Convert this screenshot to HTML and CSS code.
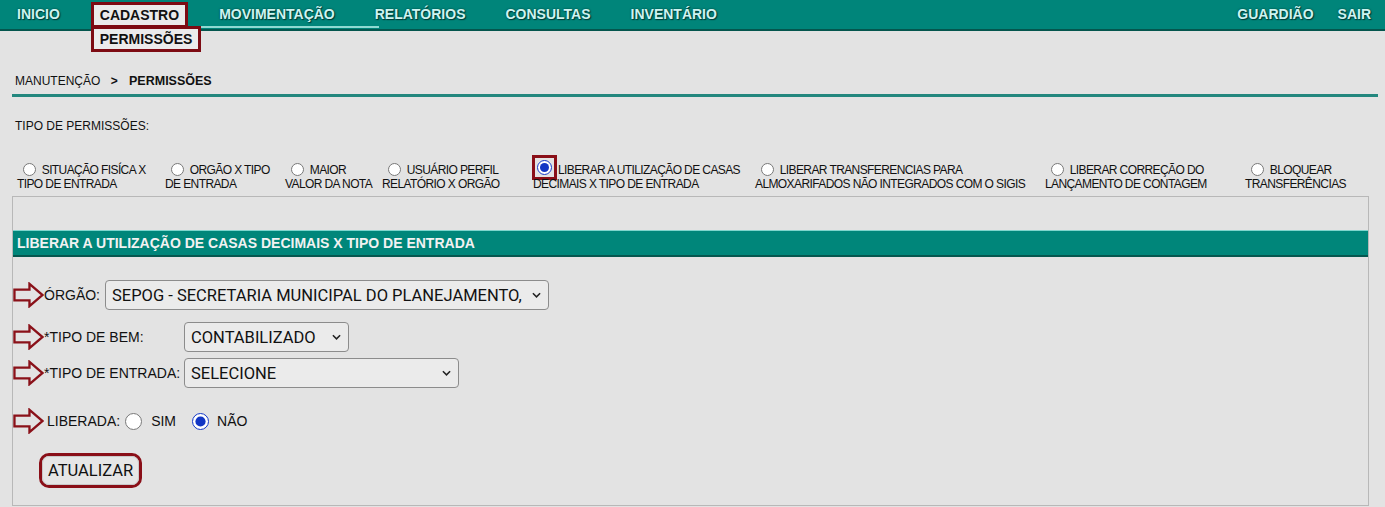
FILE: index.html
```html
<!DOCTYPE html>
<html lang="pt-BR">
<head>
  <meta charset="UTF-8">
  <meta name="viewport" content="width=device-width, initial-scale=1.0">
  <title>Permissões</title>
  <link rel="stylesheet" href="styles.css">
</head>
<body>
  <nav class="topbar">
    <ul class="menu">
      <li><a href="#">INICIO</a></li>
      <li class="menu-open">
        <a href="#">CADASTRO</a>
        <ul class="submenu">
          <li><a href="#">PERMISSÕES</a></li>
        </ul>
      </li>
      <li class="menu-hover"><a href="#">MOVIMENTAÇÃO</a></li>
      <li><a href="#">RELATÓRIOS</a></li>
      <li><a href="#">CONSULTAS</a></li>
      <li><a href="#">INVENTÁRIO</a></li>
    </ul>
    <ul class="menu menu-right">
      <li><a href="#">GUARDIÃO</a></li>
      <li><a href="#">SAIR</a></li>
    </ul>
  </nav>

  <main class="page">
    <div class="crumb">MANUTENÇÃO <span class="sep">&gt;</span> <b>PERMISSÕES</b></div>

    <p class="section-label">TIPO DE PERMISSÕES:</p>

    <div class="options">
      <label class="opt"><input type="radio" name="tipo"> SITUAÇÃO FISÍCA X<br>TIPO DE ENTRADA</label>
      <label class="opt"><input type="radio" name="tipo"> ORGÃO X TIPO<br>DE ENTRADA</label>
      <label class="opt"><input type="radio" name="tipo"> MAIOR<br>VALOR DA NOTA</label>
      <label class="opt"><input type="radio" name="tipo"> USUÁRIO PERFIL<br>RELATÓRIO X ORGÃO</label>
      <label class="opt opt-picked"><input type="radio" name="tipo" checked>LIBERAR A UTILIZAÇÃO DE CASAS<br>DECIMAIS X TIPO DE ENTRADA</label>
      <label class="opt"><input type="radio" name="tipo"> LIBERAR TRANSFERENCIAS PARA<br>ALMOXARIFADOS NÃO INTEGRADOS COM O SIGIS</label>
      <label class="opt"><input type="radio" name="tipo"> LIBERAR CORREÇÃO DO<br>LANÇAMENTO DE CONTAGEM</label>
      <label class="opt"><input type="radio" name="tipo"> BLOQUEAR<br>TRANSFERÊNCIAS</label>
    </div>

    <section class="panel">
      <h2 class="panel-title">LIBERAR A UTILIZAÇÃO DE CASAS DECIMAIS X TIPO DE ENTRADA</h2>

      <form class="form">
        <div class="row row-orgao">
          <svg class="arrow" viewBox="0 0 32 26"><polygon points="1.5,7.5 17,7.5 17,1.5 30.5,13 17,24.5 17,18.5 1.5,18.5"/></svg>
          <label>ÓRGÃO:</label>
          <span class="select select-orgao">
            <select><option>SEPOG - SECRETARIA MUNICIPAL DO PLANEJAMENTO,</option></select>
            <svg class="chev" viewBox="0 0 10 6"><polyline points="1,1 5,5 9,1"/></svg>
          </span>
        </div>

        <div class="row row-bem">
          <svg class="arrow" viewBox="0 0 32 26"><polygon points="1.5,7.5 17,7.5 17,1.5 30.5,13 17,24.5 17,18.5 1.5,18.5"/></svg>
          <label class="label-fixed">*TIPO DE BEM:</label>
          <span class="select select-bem">
            <select><option>CONTABILIZADO</option></select>
            <svg class="chev" viewBox="0 0 10 6"><polyline points="1,1 5,5 9,1"/></svg>
          </span>
        </div>

        <div class="row row-entrada">
          <svg class="arrow" viewBox="0 0 32 26"><polygon points="1.5,7.5 17,7.5 17,1.5 30.5,13 17,24.5 17,18.5 1.5,18.5"/></svg>
          <label class="label-fixed">*TIPO DE ENTRADA:</label>
          <span class="select select-entrada">
            <select><option>SELECIONE</option></select>
            <svg class="chev" viewBox="0 0 10 6"><polyline points="1,1 5,5 9,1"/></svg>
          </span>
        </div>

        <div class="row row-liberada">
          <svg class="arrow" viewBox="0 0 32 26"><polygon points="1.5,7.5 17,7.5 17,1.5 30.5,13 17,24.5 17,18.5 1.5,18.5"/></svg>
          <span class="label-liberada">LIBERADA:</span>
          <label class="yesno"><input type="radio" name="liberada"> SIM</label>
          <label class="yesno"><input type="radio" name="liberada" checked> NÃO</label>
        </div>

        <div class="actions">
          <span class="btn-ring"><button type="button" class="btn">ATUALIZAR</button></span>
        </div>
      </form>
    </section>
  </main>
</body>
</html>
```

FILE: styles.css
```css
/* page */
body {
  margin: 0;
  background-color: #e3e3e3;
  font-family: "Liberation Sans", Arial, sans-serif;
  color: #111;
}
ul {
  list-style: none;
  margin: 0;
  padding: 0;
}
a {
  text-decoration: none;
}

/* top menu */
.topbar {
  display: flex;
  justify-content: space-between;
  height: 29px;
  padding: 0 14px 0 17px;
  background-color: #00857a;
  border-bottom: 2px solid #04564e;
}
.menu {
  display: flex;
  gap: 40px;
}
.menu-right {
  gap: 24px;
}
.menu > li {
  position: relative;
  display: flex;
  align-items: center;
}
.menu > li > a {
  font-size: 14px;
  font-weight: bold;
  line-height: 27px;
  color: #cdf4f1;
  text-shadow: 0 0 2px #013a35, 1px 1px 1px #013a35;
}
.menu-open > a {
  display: block;
  margin: 0 -9px;
  padding: 0 6px;
  line-height: 20px !important;
  background-color: #ebebeb;
  border: 3px solid #7d0b13;
  color: #111 !important;
  text-shadow: none !important;
}
.menu-hover > a::after {
  content: "";
  position: absolute;
  left: -18px;
  right: -44px;
  bottom: 1px;
  height: 2px;
  background-color: #8fd9d2;
}
.submenu {
  position: absolute;
  top: 26px;
  left: -9px;
  background-color: #ebebeb;
  border: 3px solid #7d0b13;
  padding: 0 6px;
  white-space: nowrap;
  z-index: 2;
}
.submenu a {
  font-size: 14px;
  font-weight: bold;
  line-height: 20px;
  color: #111;
}

/* content */
.page {
  padding: 0 7px 0 12px;
}
.crumb {
  margin-top: 43px;
  padding-left: 3px;
  font-size: 12px;
  line-height: 14px;
  padding-bottom: 6px;
  border-bottom: 3px solid #23877e;
}
.crumb b {
  font-size: 12.5px;
}
.crumb .sep {
  margin: 0 8px 0 7px;
  font-weight: bold;
}
.section-label {
  margin: 22px 0 0 3px;
  font-size: 12px;
  line-height: 14px;
}

/* permission type radios */
.options {
  display: grid;
  grid-template-columns: 148px 120px 97px 151px 222px 290px 200px 1fr;
  height: 28px;
  margin-top: 30px;
  padding-left: 5px;
}
.opt {
  height: 28px;
  font-size: 12px;
  line-height: 14px;
  letter-spacing: -0.6px;
  white-space: nowrap;
}
.opt input {
  width: 13px;
  height: 13px;
  margin: 0 3px 0 6px;
  vertical-align: -2px;
}
.opt-picked input {
  width: 15px;
  height: 15px;
  margin: -3px 6px -3px 4px;
  vertical-align: -1px;
  accent-color: #1236c4;
  outline: 3px solid #8a0f18;
  outline-offset: 2px;
  border-radius: 3px;
}

/* panel */
.panel {
  margin: 5px 9px 0 0;
  height: 275px;
  padding-top: 33px;
  border: 1px solid #b8b8b8;
}
.panel-title {
  margin: 0;
  height: 24px;
  padding-left: 4px;
  font-size: 14px;
  font-weight: bold;
  line-height: 24px;
  color: #f2f2f2;
  background-color: #00867a;
  border-top: 1px solid #7ed5cd;
  border-bottom: 2px solid #05574f;
}
.form {
  padding-top: 23px;
}
.row {
  display: flex;
  align-items: center;
  font-size: 14px;
}
.row-orgao { height: 30px; }
.row-bem { height: 30px; margin-top: 12px; }
.row-entrada { height: 30px; margin-top: 6px; }
.row-liberada { height: 26px; margin-top: 20px; }

.arrow {
  width: 31px;
  height: 26px;
  flex: none;
}
.arrow polygon {
  fill: none;
  stroke: #8a1119;
  stroke-width: 2.4;
  stroke-linejoin: miter;
}
.label-fixed {
  width: 140px;
}
.row-orgao label {
  margin-right: 5px;
}
.label-liberada {
  margin-left: 3px;
}

/* selects */
.select {
  position: relative;
  display: inline-block;
  height: 30px;
}
.select select {
  appearance: none;
  width: 100%;
  height: 30px;
  padding: 0 22px 0 6px;
  font-family: Roboto, "Noto Sans", sans-serif;
  font-size: 16.5px;
  color: #111;
  background-color: #ebebeb;
  border: 1px solid #8c8c8c;
  border-radius: 4px;
}
.select-orgao { width: 444px; }
.select-bem { width: 165px; }
.select-entrada { width: 275px; }
.chev {
  position: absolute;
  right: 8px;
  top: 12px;
  width: 9px;
  height: 6px;
  pointer-events: none;
}
.chev polyline {
  fill: none;
  stroke: #222;
  stroke-width: 1.7;
}

/* sim / nao */
.yesno {
  display: flex;
  align-items: center;
  font-size: 14px;
}
.yesno input {
  width: 17px;
  height: 17px;
  margin: 0 9px 0 5px;
  accent-color: #1236c4;
}
.yesno + .yesno input {
  margin-left: 16px;
  margin-right: 8px;
}

/* button */
.actions {
  margin-top: 19px;
  padding-left: 26px;
}
.btn-ring {
  display: inline-block;
  border: 3px solid #8a0f18;
  border-radius: 10px;
}
.btn {
  display: block;
  width: 97px;
  height: 29px;
  padding: 0;
  font-family: Roboto, "Noto Sans", sans-serif;
  font-size: 16.5px;
  color: #111;
  background-color: #e6e6e6;
  border: 1px solid #c9c9c9;
  border-radius: 7px;
}
```
